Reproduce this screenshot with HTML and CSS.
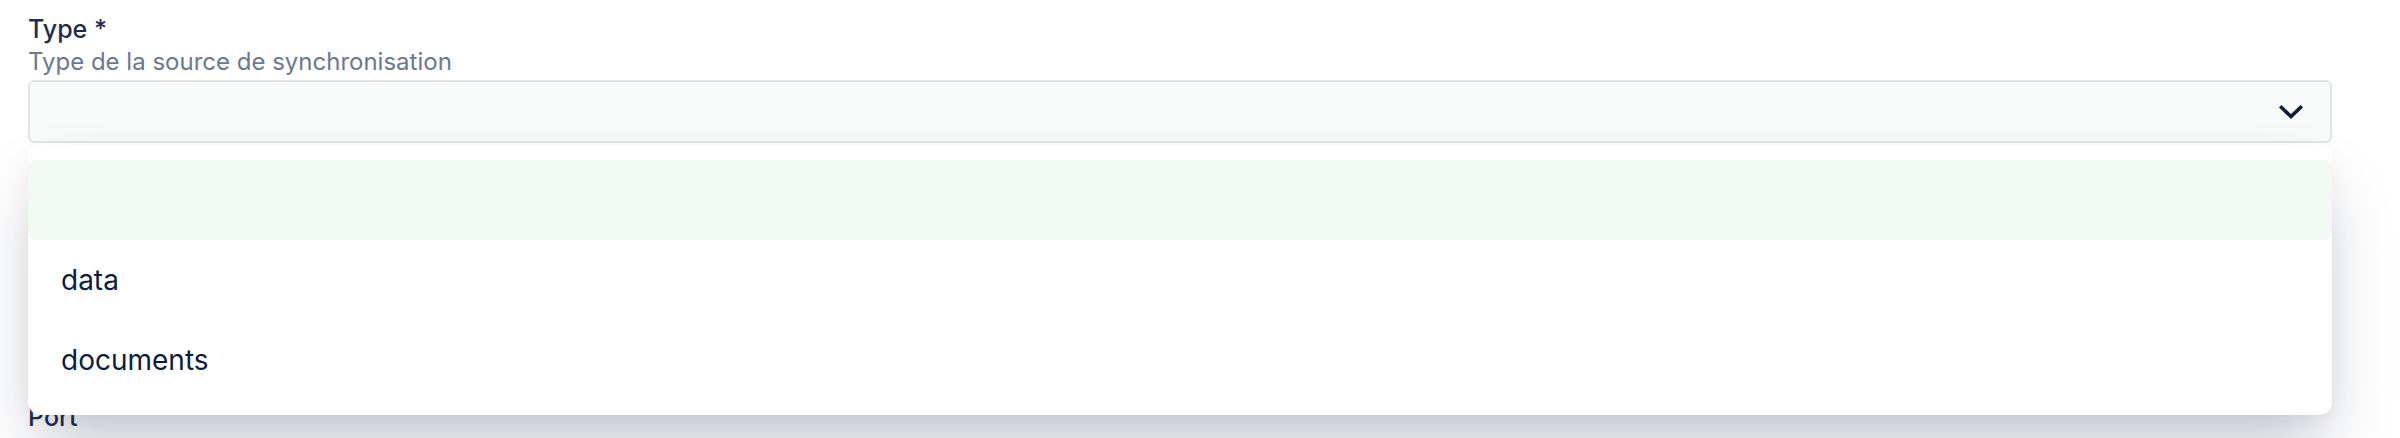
FILE: index.html
```html
<!DOCTYPE html>
<html lang="fr">
<head>
    <meta charset="UTF-8">
    <title>Source de synchronisation</title>
    <link rel="stylesheet" href="styles.css">
</head>
<body>
<div class="form">
    <div class="field">
        <div class="label">Type *</div>
        <div class="desc">Type de la source de synchronisation</div>
        <div class="select-wrap">
            <div class="select">
                <span class="value"></span>
                <svg class="chevron" width="24" height="14" viewBox="0 0 24 14">
                    <path d="M2.5 2.5 L12 11.5 L21.5 2.5" fill="none" stroke="#0b1a3d" stroke-width="3.6" stroke-linecap="square"/>
                </svg>
            </div>
            <ul class="menu">
                <li class="option active"></li>
                <li class="option">data</li>
                <li class="option">documents</li>
            </ul>
        </div>
    </div>

    <div class="field">
        <div class="label">Hôte</div>
        <div class="desc">Adresse du serveur</div>
        <div class="select"></div>
    </div>

    <div class="field">
        <div class="label">Port</div>
        <div class="desc">Port du serveur</div>
        <div class="select"></div>
    </div>
</div>
</body>
</html>
```

FILE: styles.css
```css
*{
    padding: 0;
    margin: 0;
    box-sizing: border-box;
}
ul{
    list-style-type: none;
}
body{
    background: #ffffff;
    font-family: Inter, "Noto Sans", sans-serif;
    overflow: hidden;
}
.form{
    padding: 11px 68px 0 28px;
}
.field{
    margin-bottom: 62px;
}
.label{
    font-size: 25px;
    line-height: 36px;
    font-weight: 500;
    color: #1f2d4d;
}
.desc{
    font-size: 24px;
    line-height: 30px;
    color: #6b7890;
    margin-bottom: 3px;
}
.select-wrap{
    position: relative;
}
.select{
    height: 63px;
    border: 2px solid #e2e4ea;
    border-radius: 6px;
    background-color: #f8f9f9;
    display: flex;
    align-items: center;
    justify-content: flex-end;
    padding-right: 27px;
}
.chevron{
    display: block;
}
.menu{
    position: absolute;
    top: calc(100% + 2px);
    left: 0;
    right: 0;
    z-index: 10;
    padding: 15px 0;
    background-color: #ffffff;
    border-radius: 13px;
    box-shadow: 0 38px 70px -12px rgba(17, 24, 52, 0.25), 0 8px 24px rgba(17, 24, 52, 0.04);
}
.option{
    height: 80px;
    line-height: 80px;
    padding-left: 33px;
    font-size: 28px;
    color: #0d1c40;
}
.option.active{
    background-color: #f2f8f4;
    border-radius: 8px;
}
```
